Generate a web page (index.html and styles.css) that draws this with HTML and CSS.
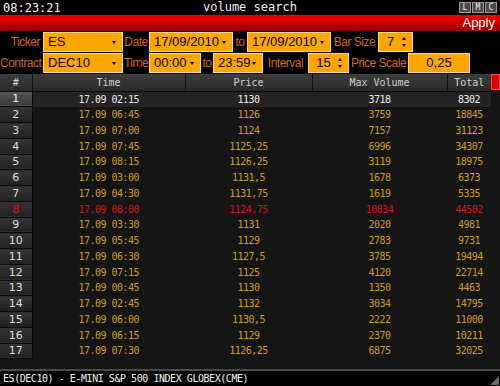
FILE: index.html
```html
<!DOCTYPE html>
<html lang="en">

<head>
    <meta charset="UTF-8">
    <title>volume search</title>
    <link rel="stylesheet" href="styles.css">
</head>

<body>
    <div class="window">
        <div class="titlebar">
            <span class="clock">08:23:21</span>
            <span class="title">volume search</span>
            <div class="win-btns">
                <span>L</span><span>M</span><span>C</span>
            </div>
        </div>

        <div class="applybar">Apply</div>

        <div class="form">
            <div class="form-row">
                <label class="lbl w43 right">Ticker</label>
                <div class="field w80 drop">ES</div>
                <label class="lbl w26">Date</label>
                <div class="field w84 drop">17/09/2010</div>
                <label class="lbl w14">to</label>
                <div class="field w84 drop">17/09/2010</div>
                <label class="lbl w47">Bar Size</label>
                <div class="field w35 spin center">7</div>
            </div>
            <div class="form-row">
                <label class="lbl w43 right">Contract</label>
                <div class="field w80 drop">DEC10</div>
                <label class="lbl w26">Time</label>
                <div class="field w52 drop">00:00</div>
                <label class="lbl w12">to</label>
                <div class="field w50 drop">23:59</div>
                <label class="lbl w45">Interval</label>
                <div class="field w41 spin center">15</div>
                <label class="lbl w59">Price Scale</label>
                <div class="field w62 center">0,25</div>
            </div>
        </div>

        <div class="grid-wrap">
            <div class="grid">
                <table>
                    <colgroup>
                        <col style="width:32px">
                        <col style="width:153px">
                        <col style="width:127px">
                        <col style="width:135px">
                        <col style="width:44px">
                    </colgroup>
                    <thead>
                        <tr>
                            <th>#</th>
                            <th>Time</th>
                            <th>Price</th>
                            <th>Max Volume</th>
                            <th>Total</th>
                        </tr>
                    </thead>
                    <tbody>
                        <tr class="selected"><td>1</td><td>17.09 02:15</td><td>1130</td><td>3718</td><td>8302</td></tr>
                        <tr><td>2</td><td>17.09 06:45</td><td>1126</td><td>3759</td><td>18845</td></tr>
                        <tr><td>3</td><td>17.09 07:00</td><td>1124</td><td>7157</td><td>31123</td></tr>
                        <tr><td>4</td><td>17.09 07:45</td><td>1125,25</td><td>6996</td><td>34307</td></tr>
                        <tr><td>5</td><td>17.09 08:15</td><td>1126,25</td><td>3119</td><td>18975</td></tr>
                        <tr><td>6</td><td>17.09 03:00</td><td>1131,5</td><td>1678</td><td>6373</td></tr>
                        <tr><td>7</td><td>17.09 04:30</td><td>1131,75</td><td>1619</td><td>5335</td></tr>
                        <tr class="alert"><td>8</td><td>17.09 08:00</td><td>1124,75</td><td>10834</td><td>44502</td></tr>
                        <tr><td>9</td><td>17.09 03:30</td><td>1131</td><td>2020</td><td>4981</td></tr>
                        <tr><td>10</td><td>17.09 05:45</td><td>1129</td><td>2783</td><td>9731</td></tr>
                        <tr><td>11</td><td>17.09 06:30</td><td>1127,5</td><td>3785</td><td>19494</td></tr>
                        <tr><td>12</td><td>17.09 07:15</td><td>1125</td><td>4120</td><td>22714</td></tr>
                        <tr><td>13</td><td>17.09 00:45</td><td>1130</td><td>1350</td><td>4463</td></tr>
                        <tr><td>14</td><td>17.09 02:45</td><td>1132</td><td>3034</td><td>14795</td></tr>
                        <tr><td>15</td><td>17.09 06:00</td><td>1130,5</td><td>2222</td><td>11000</td></tr>
                        <tr><td>16</td><td>17.09 06:15</td><td>1129</td><td>2370</td><td>10211</td></tr>
                        <tr><td>17</td><td>17.09 07:30</td><td>1126,25</td><td>6875</td><td>32025</td></tr>
                    </tbody>
                </table>
            </div>
            <div class="scrollbar"><div class="thumb"></div></div>
        </div>

        <div class="statusbar">
            <span>ES(DEC10) - E-MINI S&amp;P 500 INDEX GLOBEX(CME)</span>
            <span class="grip"></span>
        </div>
    </div>
</body>

</html>
```

FILE: styles.css
```css
/* Global reset */

* {
    margin: 0;
    padding: 0;
    box-sizing: border-box;
}

body {
    background-color: #000;
    width: 500px;
    height: 386px;
    overflow: hidden;
}

.window {
    display: flex;
    flex-direction: column;
    width: 500px;
    height: 386px;
    background-color: #000;
}

/* Title bar */

.titlebar {
    height: 15px;
    display: flex;
    align-items: center;
    position: relative;
    font-family: 'DejaVu Sans Mono', monospace;
    font-size: 12px;
    color: #f2f2f2;
    padding-left: 3px;
}

.title {
    position: absolute;
    left: 203px;
    top: 0;
    line-height: 15px;
}

.win-btns {
    margin-left: auto;
    display: flex;
    gap: 1px;
    margin-right: 3px;
}

.win-btns span {
    width: 12px;
    height: 11px;
    background-color: #4a4a4a;
    border: 1px solid #9a9a9a;
    font-family: 'DejaVu Sans Mono', monospace;
    font-size: 8px;
    line-height: 9px;
    text-align: center;
    color: #eee;
}

/* Red apply bar */

.applybar {
    height: 16px;
    background: linear-gradient(#f00000, #c00000 60%, #8c0000);
    color: #fff;
    font-family: 'Liberation Sans', Arial, sans-serif;
    font-size: 13px;
    line-height: 16px;
    text-align: right;
    padding-right: 5px;
}

/* Search form */

.form {
    padding-top: 1px;
    height: 43px;
    display: flex;
    flex-direction: column;
    gap: 1px;
}

.form-row {
    display: flex;
    height: 20px;
    align-items: center;
}

.lbl {
    font-family: 'Liberation Sans', Arial, sans-serif;
    font-size: 12px;
    color: #d2641e;
    text-align: center;
    white-space: nowrap;
    letter-spacing: -0.5px;
}

.lbl.right {
    text-align: right;
    padding-right: 3px;
}

.field {
    height: 20px;
    background-color: #ffa500;
    border: 1px solid #ffd98a;
    font-family: 'Liberation Sans', Arial, sans-serif;
    font-size: 13px;
    line-height: 18px;
    color: #000;
    padding-left: 4px;
    position: relative;
}

.field.center {
    text-align: center;
    padding-left: 0;
}

.drop::after {
    content: "";
    position: absolute;
    right: 6px;
    top: 8px;
    border-left: 2.5px solid transparent;
    border-right: 2.5px solid transparent;
    border-top: 3px solid #000;
}

.spin {
    padding-right: 10px;
}

.spin::before,
.spin::after {
    content: "";
    position: absolute;
    right: 6px;
    border-left: 2px solid transparent;
    border-right: 2px solid transparent;
}

.spin::before {
    top: 4px;
    border-bottom: 3px solid #000;
}

.spin::after {
    top: 11px;
    border-top: 3px solid #000;
}

.w12 { width: 12px; }
.w14 { width: 14px; }
.w26 { width: 26px; }
.w35 { width: 35px; }
.w41 { width: 41px; }
.w43 { width: 43px; }
.w45 { width: 45px; }
.w47 { width: 47px; }
.w50 { width: 50px; }
.w52 { width: 52px; }
.w59 { width: 59px; }
.w62 { width: 62px; }
.w80 { width: 80px; }
.w84 { width: 84px; }

/* Results grid */

.grid-wrap {
    display: flex;
    height: 297px;
    background-color: #151515;
    border-bottom: 2px solid #4a4a4a;
}

.grid {
    width: 491px;
}

table {
    width: 491px;
    table-layout: fixed;
    border-collapse: collapse;
    font-family: 'DejaVu Sans Mono', monospace;
    font-size: 10px;
}

th {
    height: 17px;
    background: linear-gradient(#3c3c3c, #2a2a2a);
    color: #cfcfcf;
    font-weight: normal;
    border-left: 1px solid #111;
    border-bottom: 1px solid #0c0c0c;
}

th:first-child {
    border-left: none;
}

td {
    height: 15.75px;
    padding: 0;
    text-align: center;
    color: #d39b22;
    letter-spacing: -0.5px;
    white-space: nowrap;
}

td:first-child {
    background: linear-gradient(#343434, #222);
    color: #ddd;
    font-family: 'DejaVu Sans', sans-serif;
    font-size: 11px;
    letter-spacing: 0;
    border-bottom: 1px solid #0a0a0a;
    border-right: 1px solid #0a0a0a;
}

tr.selected td {
    background-color: #242424;
    color: #e8e8e8;
}

tr.selected td:first-child {
    background: linear-gradient(#555, #3a3a3a);
}

tr.alert td {
    color: #d01818;
}

.scrollbar {
    width: 9px;
}

.thumb {
    height: 16px;
    background-color: #e00000;
    border: 1px solid #ff4a4a;
}

/* Status bar */

.statusbar {
    flex: 1;
    display: flex;
    align-items: center;
    padding-left: 3px;
    font-family: 'DejaVu Sans Mono', monospace;
    font-size: 10px;
    letter-spacing: -0.45px;
    color: #f2f2f2;
}

.grip {
    margin-left: auto;
    margin-top: 4px;
    margin-right: 1px;
    width: 0;
    height: 0;
    border-left: 9px solid transparent;
    border-bottom: 9px solid #6a6a6a;
}
```
